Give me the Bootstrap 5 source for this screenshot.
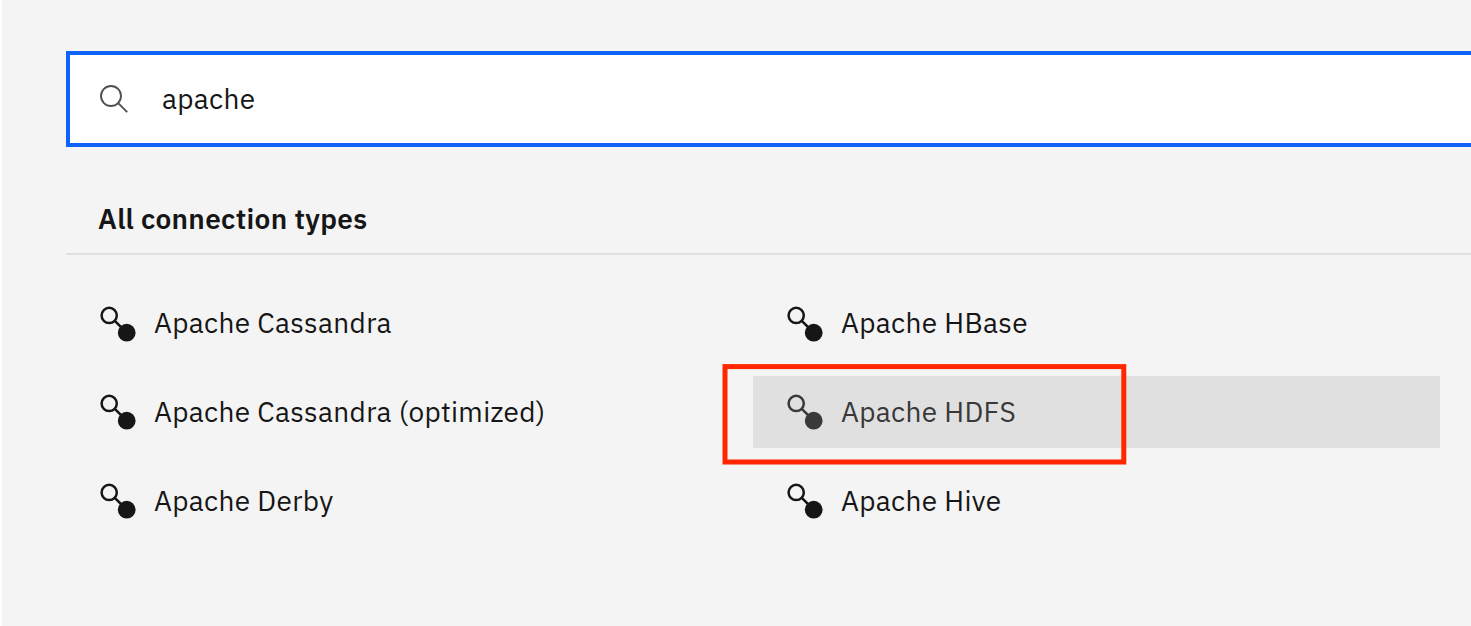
<!DOCTYPE html>
<html lang="en">
<head>
<meta charset="utf-8">
<meta name="viewport" content="width=device-width, initial-scale=1">
<title>Connection types</title>
<link rel="stylesheet" href="https://cdn.jsdelivr.net/npm/bootstrap@5.3.0/dist/css/bootstrap.min.css">
<style>
  body { background: #f4f4f4; color: #161616; font-family: "IBM Plex Sans", Roboto, sans-serif; font-size: 28px; letter-spacing: .32px; line-height: 36px; border-left: 2px solid #fff; }
  main { padding: 51px 0 0 64px; }
  .search-box { height: 96px; border: 4px solid #0f62fe; border-right: 0; padding-left: 30px; }
  .search-box .form-control { font: inherit; letter-spacing: inherit; color: #161616; margin-left: 34px; }
  .types-title { font-size: 28px; line-height: 36px; font-weight: 600; padding: 0 32px 16px; margin-top: 54px; border-bottom: 2px solid #e0e0e0; }
  .types-grid { grid-template-columns: 687px 687px; row-gap: 17px; margin-top: 32px; }
  .type-item { height: 72px; padding-left: 34px; gap: 18px; color: inherit; }
  .type-item svg { margin-top: -1px; }
  .type-item.first-row svg { margin-top: 1px; }
  .type-item.hovered { background: #e0e0e0; color: #393939; }
  .callout { left: -31px; top: -12px; width: 405px; height: 101px; }
</style>
</head>
<body class="overflow-hidden vh-100">
<svg class="d-none">
  <symbol id="connector" viewBox="0 0 36 36">
    <circle cx="9.2" cy="9.4" r="7.6" fill="none" stroke="currentColor" stroke-width="2.5"/>
    <path d="M14.5 14.7 22 22" stroke="currentColor" stroke-width="2.5"/>
    <circle cx="26.7" cy="26.7" r="8.9" fill="currentColor"/>
  </symbol>
</svg>
<main>
  <div class="search-box d-flex align-items-center bg-white">
    <svg class="flex-shrink-0" width="28" height="28" viewBox="0 0 28 28" fill="none" stroke="#525252" stroke-width="1.9"><circle cx="11" cy="11" r="10"/><path d="M18.2 18.2 27.2 27.2"/></svg>
    <input class="form-control border-0 rounded-0 shadow-none bg-transparent p-0 pe-4" type="text" value="apache" aria-label="Search">
  </div>
  <h2 class="types-title mb-0">All connection types</h2>
  <div class="types-grid d-grid">
    <a class="type-item first-row d-flex align-items-center text-decoration-none"><svg width="36" height="36"><use href="#connector"/></svg><span>Apache Cassandra</span></a>
    <a class="type-item first-row d-flex align-items-center text-decoration-none"><svg width="36" height="36"><use href="#connector"/></svg><span>Apache HBase</span></a>
    <a class="type-item d-flex align-items-center text-decoration-none"><svg width="36" height="36"><use href="#connector"/></svg><span>Apache Cassandra (optimized)</span></a>
    <a class="type-item hovered position-relative d-flex align-items-center text-decoration-none"><svg width="36" height="36"><use href="#connector"/></svg><span>Apache HDFS</span>
      <svg class="callout position-absolute m-0" viewBox="0 0 405 101"><rect x="3" y="2.6" width="398.8" height="95.4" fill="none" stroke="#ff2600" stroke-width="5"/></svg></a>
    <a class="type-item d-flex align-items-center text-decoration-none"><svg width="36" height="36"><use href="#connector"/></svg><span>Apache Derby</span></a>
    <a class="type-item d-flex align-items-center text-decoration-none"><svg width="36" height="36"><use href="#connector"/></svg><span>Apache Hive</span></a>
  </div>
</main>
<script src="https://cdn.jsdelivr.net/npm/bootstrap@5.3.0/dist/js/bootstrap.bundle.min.js"></script>
</body>
</html>
